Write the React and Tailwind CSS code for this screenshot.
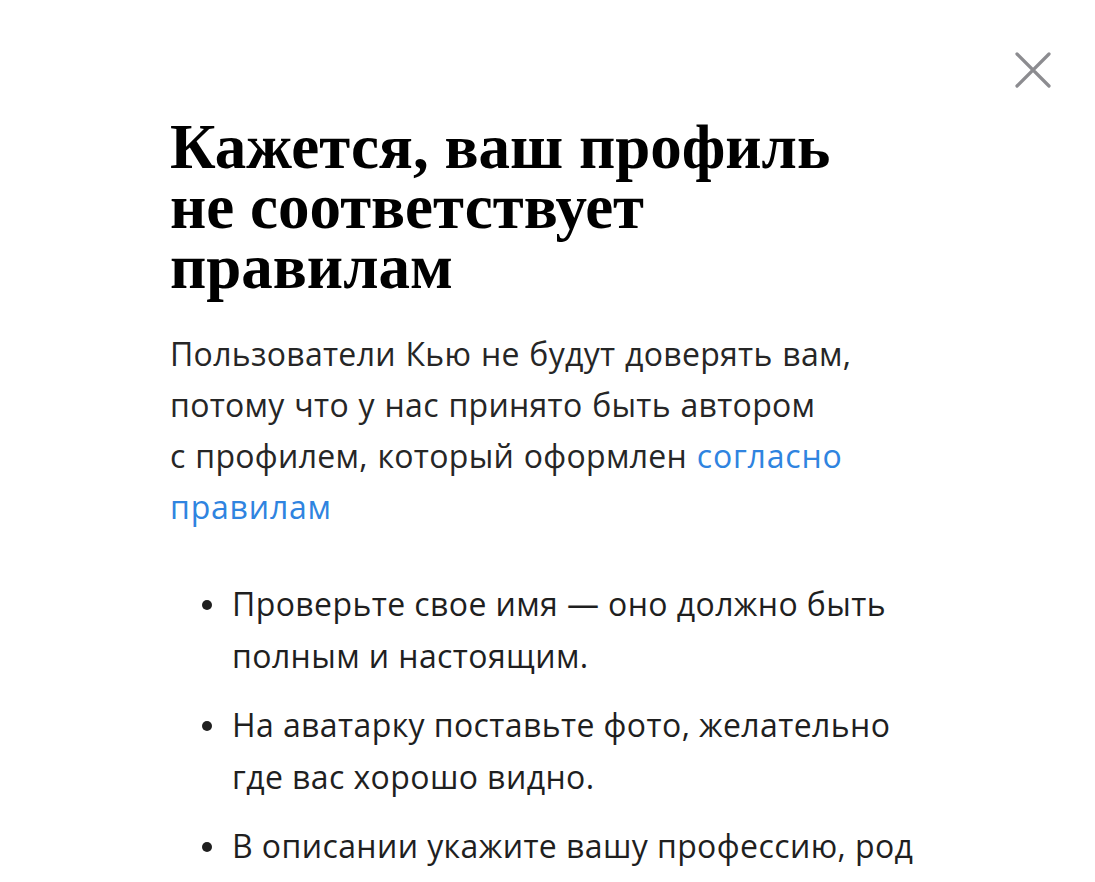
import React from 'react';

const bullets = [
  ['Проверьте свое имя — оно должно быть', 'полным и настоящим.'],
  ['На аватарку поставьте фото, желательно', 'где вас хорошо видно.'],
  ['В описании укажите вашу профессию, род'],
];

function CloseIcon() {
  return (
    <svg width="36" height="36" viewBox="0 0 36 36" fill="none">
      <path d="M2 2L34 34M34 2L2 34" stroke="#8c8c90" strokeWidth="3.2" strokeLinecap="round" />
    </svg>
  );
}

export default function App() {
  return (
    <div className="relative w-[1095px] h-[882px] overflow-hidden bg-white">
      {/* Close button */}
      <button className="absolute top-[52px] right-[44px] p-0">
        <CloseIcon />
      </button>

      <div className="pl-[170px] pt-[117px]">
        <h1 className="font-['Liberation_Serif',serif] font-bold text-[63px] leading-[60px] text-black">
          Кажется, ваш профиль
          <br />
          не соответствует
          <br />
          правилам
        </h1>

        <p className="mt-[31px] font-['Open_Sans',sans-serif] text-[32px] leading-[51px] text-[#262626] tracking-[0.3px] [word-spacing:1px]">
          Пользователи Кью не будут доверять вам,
          <br />
          потому что у нас принято быть автором
          <br />
          с профилем, который оформлен{' '}
          <a href="#" className="text-[#2f84e0] tracking-[0.8px]">
            согласно
            <br />
            правилам
          </a>
        </p>

        <ul className="mt-[46px] flex flex-col gap-[17px] font-['Open_Sans',sans-serif] text-[32px] leading-[52px] text-[#1f1f1f] tracking-[0.4px]">
          {bullets.map((lines, i) => (
            <li key={i} className="flex">
              <span className="w-[62px] shrink-0 flex justify-end pr-[20px] pt-[22px]">
                <span className="block w-[10px] h-[10px] rounded-full bg-[#1f1f1f]" />
              </span>
              <span>
                {lines.map((l, j) => (
                  <React.Fragment key={j}>
                    {j > 0 && <br />}
                    {l}
                  </React.Fragment>
                ))}
              </span>
            </li>
          ))}
        </ul>
      </div>
    </div>
  );
}
